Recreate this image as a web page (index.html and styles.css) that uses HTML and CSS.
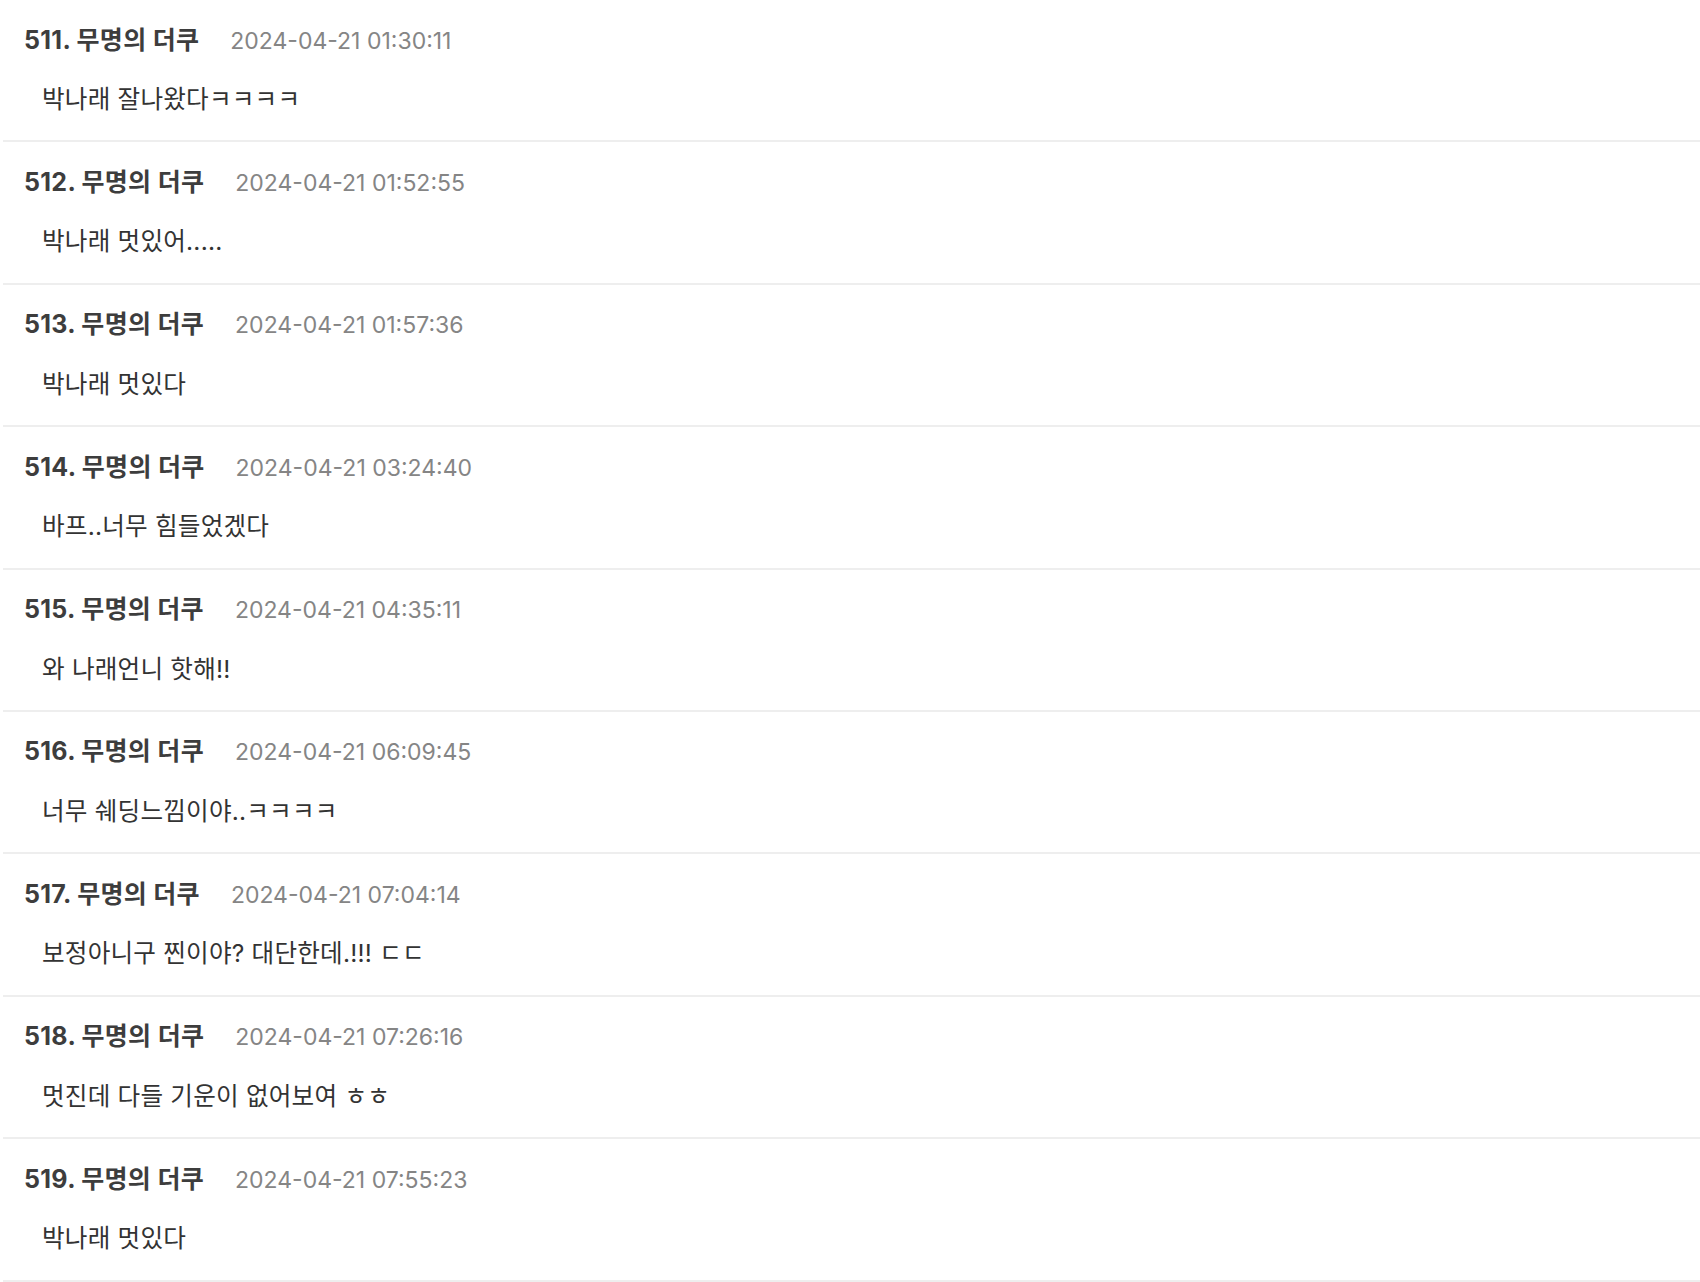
FILE: index.html
```html
<!DOCTYPE html>
<html lang="ko">
<head>
<meta charset="utf-8">
<title>댓글</title>
<link rel="stylesheet" href="styles.css">
</head>
<body>
<ul class="comments">
  <li class="comment">
    <div class="comment-head"><span class="author">511. 무명의 더쿠</span><span class="date">2024-04-21 01:30:11</span></div>
    <p class="comment-body">박나래 잘나왔다ㅋㅋㅋㅋ</p>
  </li>
  <li class="comment">
    <div class="comment-head"><span class="author">512. 무명의 더쿠</span><span class="date">2024-04-21 01:52:55</span></div>
    <p class="comment-body">박나래 멋있어.....</p>
  </li>
  <li class="comment">
    <div class="comment-head"><span class="author">513. 무명의 더쿠</span><span class="date">2024-04-21 01:57:36</span></div>
    <p class="comment-body">박나래 멋있다</p>
  </li>
  <li class="comment">
    <div class="comment-head"><span class="author">514. 무명의 더쿠</span><span class="date">2024-04-21 03:24:40</span></div>
    <p class="comment-body">바프..너무 힘들었겠다</p>
  </li>
  <li class="comment">
    <div class="comment-head"><span class="author">515. 무명의 더쿠</span><span class="date">2024-04-21 04:35:11</span></div>
    <p class="comment-body">와 나래언니 핫해!!</p>
  </li>
  <li class="comment">
    <div class="comment-head"><span class="author">516. 무명의 더쿠</span><span class="date">2024-04-21 06:09:45</span></div>
    <p class="comment-body">너무 쉐딩느낌이야..ㅋㅋㅋㅋ</p>
  </li>
  <li class="comment">
    <div class="comment-head"><span class="author">517. 무명의 더쿠</span><span class="date">2024-04-21 07:04:14</span></div>
    <p class="comment-body">보정아니구 찐이야? 대단한데.!!! ㄷㄷ</p>
  </li>
  <li class="comment">
    <div class="comment-head"><span class="author">518. 무명의 더쿠</span><span class="date">2024-04-21 07:26:16</span></div>
    <p class="comment-body">멋진데 다들 기운이 없어보여 ㅎㅎ</p>
  </li>
  <li class="comment">
    <div class="comment-head"><span class="author">519. 무명의 더쿠</span><span class="date">2024-04-21 07:55:23</span></div>
    <p class="comment-body">박나래 멋있다</p>
  </li>
</ul>
</body>
</html>
```
FILE: styles.css
```css
html, body {
  margin: 0;
  padding: 0;
  background: #ffffff;
}

body {
  font-family: "Inter", "Noto Sans CJK KR", sans-serif;
  color: #333333;
}

.comments {
  list-style: none;
  margin: 0 0 0 3px;
  padding: 0;
}

.comment {
  display: flex;
  flex-direction: column;
  padding: 24.5px 0 26.4px 21px;
  border-bottom: 2px solid #eeeeee;
}

.comment-head {
  display: flex;
  align-items: baseline;
  gap: 31px;
  height: 30px;
  line-height: 30px;
}

.author {
  font-size: 25px;
  font-weight: 700;
  letter-spacing: 0.3px;
  color: #3d3d3d;
}

.date {
  font-size: 23px;
  font-weight: 400;
  color: #858585;
}

.comment-body {
  margin: 29.5px 0 0 0;
  padding-left: 18px;
  font-size: 24.6px;
  letter-spacing: 0.2px;
  line-height: 30px;
  height: 30px;
  color: #333333;
}
```
